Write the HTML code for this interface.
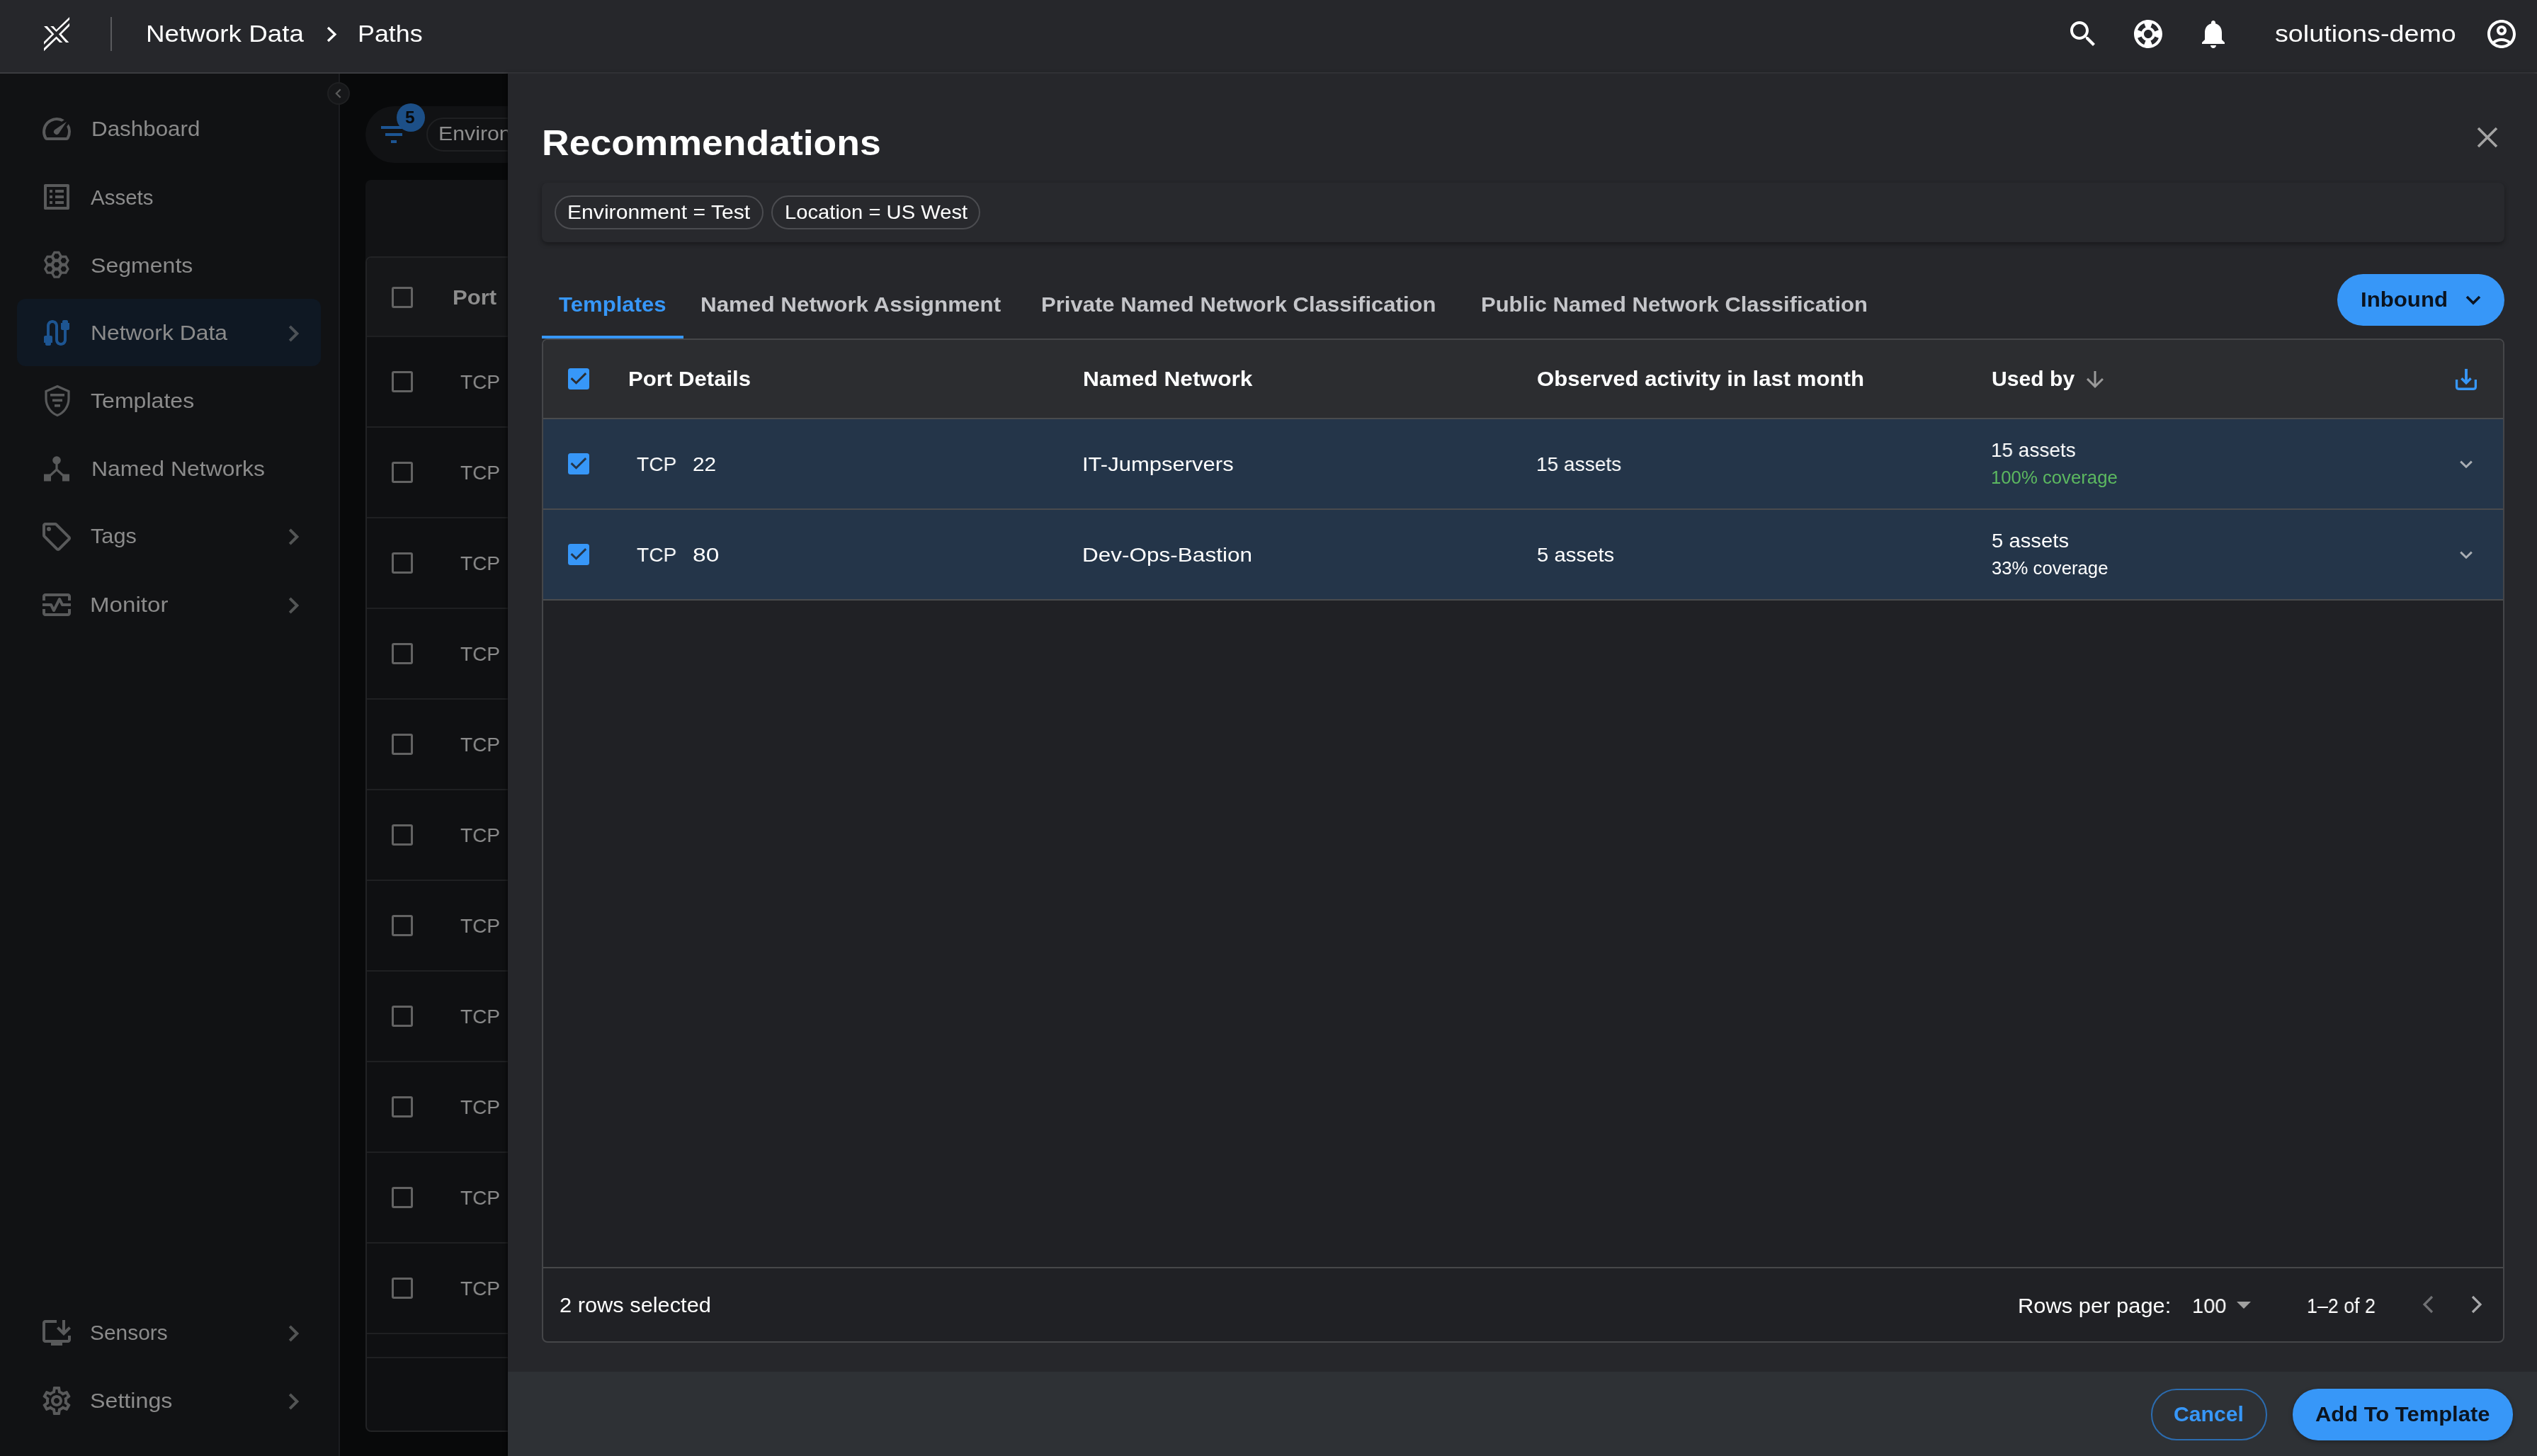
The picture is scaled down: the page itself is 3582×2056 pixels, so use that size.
<!DOCTYPE html>
<html><head><meta charset="utf-8"><title>Recommendations</title>
<style>
html,body{margin:0;padding:0;}
body{width:3582px;height:2056px;overflow:hidden;position:relative;background:#08090a;font-family:"Liberation Sans",sans-serif;}
.a{position:absolute;box-sizing:border-box;}
.t{position:absolute;white-space:nowrap;line-height:1;transform-origin:0 0;will-change:transform;}
svg{position:absolute;overflow:visible;}
</style></head><body>
<div class=a style="left:0;top:0;width:3582px;height:102px;background:#26272b"></div>
<div class=a style="left:0;top:102px;width:3582px;height:2px;background:#3b3c40"></div>
<svg style="left:50px;top:15px" width="120" height="70" viewBox="0 0 2496 1456"><g fill="#fff"><polygon points="250,460 345,460 550,690 250,1000 250,915 480,690"/><polygon points="1000,370 1000,450 760,690 985,935 895,935 685,690"/><polygon points="1000,185 1000,265 615,625 440,460 530,460 615,560"/><polygon points="250,1100 615,760 800,935 710,935 615,830 250,1190"/></g></svg>
<div class=a style="left:156px;top:24px;width:2px;height:48px;background:#5a5b5e"></div>
<div class=t style="left:206.34px;top:32.28px;font-size:32.5px;font-weight:400;color:#fff;transform:scaleX(1.1323);">Network Data</div>
<svg style="left:457px;top:37px" width="24" height="24" viewBox="0 0 24 24"><path d="M6 2 L16 11.5 L6 21" fill="none" stroke="#fff" stroke-width="3.2"/></svg>
<div class=t style="left:504.79px;top:32.28px;font-size:32.5px;font-weight:400;color:#fff;transform:scaleX(1.1032);">Paths</div>
<svg style="left:2917px;top:24px" width="48" height="48" viewBox="0 0 24 24"><path fill="#fff" d="M15.5 14h-.79l-.28-.27C15.41 12.59 16 11.11 16 9.5 16 5.91 13.09 3 9.5 3S3 5.91 3 9.5 5.91 16 9.5 16c1.61 0 3.09-.59 4.23-1.57l.27.28v.79l5 4.99L20.49 19l-4.99-5zm-6 0C7.01 14 5 11.990 5 9.5S7.01 5 9.5 5 14 7.01 14 9.5 11.99 14 9.5 14z"/></svg>
<svg style="left:3009px;top:24px" width="48" height="48" viewBox="0 0 24 24"><path fill="#fff" d="M12 2C6.48 2 2 6.48 2 12s4.48 10 10 10 10-4.48 10-10S17.52 2 12 2zm7.46 7.12l-2.78 1.15c-.51-1.36-1.58-2.440-2.95-2.94l1.15-2.78c2.1.8 3.77 2.47 4.58 4.57zM12 15c-1.66 0-3-1.34-3-3s1.34-3 3-3 3 1.34 3 3-1.34 3-3 3zM9.13 4.54l1.17 2.78c-1.38.5-2.47 1.59-2.98 2.97L4.54 9.13c.81-2.11 2.48-3.78 4.59-4.590zM4.54 14.87l2.78-1.15c.51 1.38 1.59 2.46 2.97 2.96l-1.17 2.78c-2.1-.81-3.77-2.48-4.58-4.59zm10.34 4.59l-1.15-2.78c1.37-.51 2.45-1.59 2.95-2.97l2.78 1.17c-.81 2.1-2.48 3.77-4.58 4.58z"/></svg>
<svg style="left:3101px;top:24px" width="48" height="48" viewBox="0 0 24 24"><path fill="#fff" d="M12 22c1.1 0 2-.9 2-2h-4c0 1.1.89 2 2 2zm6-6v-5c0-3.07-1.64-5.64-4.5-6.32V4c0-.83-.67-1.5-1.5-1.5s-1.5.67-1.5 1.5v.68C7.63 5.36 6 7.920 6 11v5l-2 2v1h16v-1l-2-2z"/></svg>
<div class=t style="left:3212.40px;top:32.28px;font-size:32.5px;font-weight:400;color:#fff;transform:scaleX(1.1609);">solutions-demo</div>
<svg style="left:3508px;top:24px" width="48" height="48" viewBox="0 0 24 24"><path fill="#fff" fill-rule="evenodd" d="M12 2C6.48 2 2 6.48 2 12s4.48 10 10 10 10-4.48 10-10S17.52 2 12 2zM7.35 18.5C8.66 17.56 10.26 17 12 17s3.34.56 4.65 1.5c-1.31.94-2.91 1.5-4.65 1.5s-3.34-.56-4.65-1.5zm10.79-1.38C16.450 15.8 14.32 15 12 15s-4.45.8-6.14 2.12C4.7 15.73 4 13.95 4 12c0-4.42 3.58-8 8-8s8 3.58 8 8c0 1.95-.7 3.73-1.86 5.12zM12 6c-1.93 0-3.5 1.57-3.5 3.5S10.07 13 12 13s3.5-1.57 3.5-3.5S13.93 6 12 6zm0 5c-.83 0-1.5-.67-1.5-1.5S11.17 8 12 8s1.5.67 1.5 1.5S12.83 11 12 11z"/></svg>
<div class=a style="left:0;top:104px;width:478px;height:1952px;background:#111214"></div>
<div class=a style="left:478px;top:104px;width:2px;height:1952px;background:#1c1d20"></div>
<div class=a style="left:24px;top:422px;width:429px;height:95px;background:#0f1823;border-radius:12px"></div>
<div class=a style="left:462px;top:116px;width:32px;height:32px;border-radius:50%;background:#161719;border:2px solid #1f2022"></div>
<svg style="left:470px;top:124px" width="16" height="16" viewBox="0 0 16 16"><path d="M10.7 2.2 L4.9 8 L10.7 13.8" fill="none" stroke="#5a5b5b" stroke-width="2.3"/></svg>
<div class=t style="left:128.67px;top:167.42px;font-size:29.5px;font-weight:400;color:#8b8b8b;transform:scaleX(1.0631);">Dashboard</div>
<div class=t style="left:128.30px;top:263.62px;font-size:29.5px;font-weight:400;color:#8b8b8b;">Assets</div>
<div class=t style="left:127.91px;top:359.62px;font-size:29.5px;font-weight:400;color:#8b8b8b;transform:scaleX(1.0872);">Segments</div>
<div class=t style="left:127.64px;top:455.42px;font-size:29.5px;font-weight:400;color:#8b8b8b;transform:scaleX(1.0801);">Network Data</div>
<div class=t style="left:128.00px;top:551.02px;font-size:29.5px;font-weight:400;color:#8b8b8b;transform:scaleX(1.0875);">Templates</div>
<div class=t style="left:128.53px;top:647.22px;font-size:29.5px;font-weight:400;color:#8b8b8b;transform:scaleX(1.0833);">Named Networks</div>
<div class=t style="left:128.00px;top:742.02px;font-size:29.5px;font-weight:400;color:#8b8b8b;transform:scaleX(1.0396);">Tags</div>
<div class=t style="left:126.75px;top:838.52px;font-size:29.5px;font-weight:400;color:#8b8b8b;transform:scaleX(1.1228);">Monitor</div>
<div class=t style="left:127.49px;top:1867.32px;font-size:29.5px;font-weight:400;color:#8b8b8b;transform:scaleX(1.0134);">Sensors</div>
<div class=t style="left:127.41px;top:1963.02px;font-size:29.5px;font-weight:400;color:#8b8b8b;transform:scaleX(1.0921);">Settings</div>
<svg style="left:404px;top:459.3px" width="24" height="24" viewBox="0 0 24 24"><path d="M5.2 1.9 L15.4 12 L5.2 22.1" fill="none" stroke="#4d5257" stroke-width="4"/></svg>
<svg style="left:404px;top:746px" width="24" height="24" viewBox="0 0 24 24"><path d="M5.2 1.9 L15.4 12 L5.2 22.1" fill="none" stroke="#535555" stroke-width="4"/></svg>
<svg style="left:404px;top:842.5px" width="24" height="24" viewBox="0 0 24 24"><path d="M5.2 1.9 L15.4 12 L5.2 22.1" fill="none" stroke="#535555" stroke-width="4"/></svg>
<svg style="left:404px;top:1871.3px" width="24" height="24" viewBox="0 0 24 24"><path d="M5.2 1.9 L15.4 12 L5.2 22.1" fill="none" stroke="#535555" stroke-width="4"/></svg>
<svg style="left:404px;top:1967px" width="24" height="24" viewBox="0 0 24 24"><path d="M5.2 1.9 L15.4 12 L5.2 22.1" fill="none" stroke="#535555" stroke-width="4"/></svg>
<svg style="left:56px;top:158px" width="48" height="48" viewBox="0 0 24 24"><g fill="#595a5b"><path d="M20.38 8.57l-1.23 1.85a8 8 0 0 1-.22 7.58H5.07A8 8 0 0 1 15.58 6.85l1.85-1.23A10 10 0 0 0 3.35 19a2 2 0 0 0 1.72 1h13.85a2 2 0 0 0 1.74-1 10 10 0 0 0-.27-10.44zm-9.79 6.84a2 2 0 0 0 2.83 0l5.66-8.49-8.49 5.66a2 2 0 0 0 0 2.83z"/></g></svg>
<svg style="left:56px;top:254px" width="48" height="48" viewBox="0 0 24 24"><g fill="#595a5b"><path d="M19 5v14H5V5h14m1.1-2H3.9c-.5 0-.9.4-.9.9v16.2c0 .4.4.9.9.9h16.2c.4 0 .9-.5.9-.9V3.9c0-.5-.5-.9-.9-.9zM11 7h6v2h-6V7zm0 4h6v2h-6v-2zm0 4h6v2h-6zM7 7h2v2H7zm0 4h2v2H7zm0 4h2v2H7z"/></g></svg>
<svg style="left:0;top:0" width="120" height="420" viewBox="0 0 120 420"><g fill="none" stroke="#595a5b" stroke-width="3.3" stroke-linejoin="miter"><polygon points="86.00,361.80 82.95,367.08 76.85,367.08 73.80,361.80 76.85,356.52 82.95,356.52"/><polygon points="86.00,373.80 82.95,379.08 76.85,379.08 73.80,373.80 76.85,368.52 82.95,368.52"/><polygon points="86.00,385.80 82.95,391.08 76.85,391.08 73.80,385.80 76.85,380.52 82.95,380.52"/><polygon points="76.10,367.80 73.05,373.08 66.95,373.08 63.90,367.80 66.95,362.52 73.05,362.52"/><polygon points="95.90,367.80 92.85,373.08 86.75,373.08 83.70,367.80 86.75,362.52 92.85,362.52"/><polygon points="76.10,379.80 73.05,385.08 66.95,385.08 63.90,379.80 66.95,374.52 73.05,374.52"/><polygon points="95.90,379.80 92.85,385.08 86.75,385.08 83.70,379.80 86.75,374.52 92.85,374.52"/></g></svg>
<svg style="left:56px;top:446px" width="48" height="48" viewBox="0 0 24 24"><g fill="#1d5592"><path d="M20 5V4c0-.55-.45-1-1-1h-2c-.55 0-1 .45-1 1v1h-1v4c0 .55.45 1 1 1h1v7c0 1.1-.9 2-2 2s-2-.9-2-2V7c0-2.21-1.79-4-4-4S5 4.79 5 7v7H4c-.55 0-1 .45-1 1v4h1v1c0 .55.45 1 1 1h2c.55 0 1-.45 1-1v-1h1v-4c0-.55-.45-1-1-1H7V7c0-1.1.9-2 2-2s2 .9 2 2v10c0 2.21 1.790 4 4 4s4-1.79 4-4v-7h1c.55 0 1-.45 1-1V5h-1z"/></g></svg>
<svg style="left:0;top:0" width="120" height="620" viewBox="0 0 120 620"><path d="M81 545.5 L97 552.5 V563 C97 574 90 583 81 586.5 C72 583 65 574 65 563 V552.5 Z" fill="none" stroke="#595a5b" stroke-width="3.2"/><rect x="71" y="556" width="20" height="3.6" fill="#595a5b"/><rect x="74" y="563.5" width="14" height="3.6" fill="#595a5b"/><rect x="77" y="571" width="8" height="3.6" fill="#595a5b"/></svg>
<svg style="left:0;top:0" width="120" height="700" viewBox="0 0 120 700"><circle cx="80" cy="650" r="5.8" fill="#595a5b"/><path d="M80 652 V663 L67 675 M80 663 L93 675" fill="none" stroke="#595a5b" stroke-width="3.2"/><rect x="62" y="669.5" width="10" height="10" fill="#595a5b"/><rect x="88" y="669.5" width="10" height="10" fill="#595a5b"/></svg>
<svg style="left:56px;top:734px" width="48" height="48" viewBox="0 0 24 24"><g fill="#595a5b"><path d="M21.41 11.58l-9-9C12.05 2.22 11.55 2 11 2H4c-1.1 0-2 .9-2 2v7c0 .55.22 1.05.59 1.42l9 9c.36.36.86.58 1.41.58s1.05-.22 1.41-.59l7-7c.37-.36.59-.86.59-1.41s-.23-1.06-.59-1.42zM13 20.01L4 11V4h7v-.01l9 9-7 7.02z"/><circle cx="6.5" cy="6.5" r="1.5"/></g></svg>
<svg style="left:56px;top:829.5px" width="48" height="48" viewBox="0 0 24 24"><g fill="#595a5b"><path d="M20 4H4c-1.1 0-2 .9-2 2v3h2V6h16v3h2V6c0-1.1-.9-2-2-2zM20 18H4v-3H2v3c0 1.1.9 2 2 2h16c1.1 0 2-.9 2-2v-3h-2v3zM14.89 7.55c-.34-.68-1.45-.68-1.79 0L10 13.76l-1.11-2.21A.988.988 0 0 0 8 11H2v2h5.38l1.72 3.45c.18.34.52.55.9.55s.72-.21.89-.55L14 10.24l1.11 2.21c.17.34.51.55.89.55h6v-2h-5.38l-1.73-3.45z"/></g></svg>
<svg style="left:56px;top:1858px" width="48" height="48" viewBox="0 0 24 24"><g fill="#595a5b"><path d="M20 17H4V5h8V3H4c-1.11 0-2 .89-2 2v12c0 1.1.89 2 2 2h4v2h8v-2h4c1.1 0 2-.9 2-2v-3h-2v3z"/><path d="M17 14l5-5-1.41-1.41L18 10.17V3h-2v7.17l-2.59-2.58L12 9z"/></g></svg>
<svg style="left:56px;top:1954px" width="48" height="48" viewBox="0 0 24 24"><g fill="#595a5b"><path d="M19.43 12.98c.04-.32.07-.64.07-.98 0-.34-.03-.66-.07-.98l2.11-1.65c.19-.15.24-.42.12-.64l-2-3.46a.5.5 0 0 0-.61-.22l-2.49 1c-.52-.4-1.08-.73-1.69-.98l-.38-2.65A.488.488 0 0 0 14 2h-4c-.25 0-.46.18-.49.42l-.38 2.65c-.61.25-1.17.59-1.69.98l-2.49-1a.566.566 0 0 0-.18-.03c-.17 0-.34.09-.43.25l-2 3.46c-.13.22-.07.49.12.64l2.11 1.65c-.04.32-.07.65-.07.98 0 .33.03.66.07.98l-2.11 1.65c-.19.15-.24.42-.12.64l2 3.46a.5.5 0 0 0 .61.22l2.49-1c.52.4 1.08.73 1.69.98l.38 2.65c.03.24.24.42.49.42h4c.25 0 .46-.18.49-.42l.38-2.65c.61-.25 1.17-.59 1.69-.98l2.49 1c.06.02.12.03.18.03.17 0 .34-.09.43-.25l2-3.46c.12-.22.07-.49-.12-.64l-2.11-1.65zm-1.98-1.71c.04.31.05.52.05.73 0 .21-.02.43-.05.73l-.14 1.13.89.7 1.08.84-.7 1.21-1.27-.51-1.04-.42-.9.68c-.43.32-.84.56-1.25.73l-1.06.43-.16 1.13-.2 1.35h-1.4l-.19-1.35-.16-1.13-1.06-.43c-.43-.18-.83-.41-1.23-.71l-.91-.7-1.06.43-1.27.51-.7-1.21 1.08-.84.89-.7-.14-1.13c-.03-.31-.05-.54-.05-.74s.02-.43.05-.73l.14-1.13-.89-.7-1.08-.84.7-1.21 1.27.51 1.04.42.9-.68c.43-.32.84-.56 1.25-.73l1.06-.43.16-1.13.2-1.35h1.39l.19 1.35.16 1.13 1.06.43c.43.18.83.41 1.23.71l.91.7 1.06-.43 1.27-.51.7 1.21-1.07.85-.89.7.14 1.13zM12 8c-2.21 0-4 1.79-4 4s1.79 4 4 4 4-1.79 4-4-1.79-4-4-4zm0 6c-1.1 0-2-.9-2-2s.9-2 2-2 2 .9 2 2-.9 2-2 2z"/></g></svg>
<div class=a style="left:516px;top:150px;width:400px;height:80px;border-radius:40px;background:#111214"></div>
<div class=a style="left:602px;top:166px;width:300px;height:48px;border-radius:24px;border:2px solid #1f2022"></div>
<svg style="left:536px;top:176px" width="36" height="28" viewBox="0 0 36 28"><g fill="#1d5593"><rect x="2" y="2" width="30" height="4"/><rect x="8" y="12" width="24" height="4"/><rect x="16" y="22" width="8" height="4"/></g></svg>
<div class=a style="left:560px;top:146px;width:40px;height:40px;border-radius:50%;background:#1c4f87"></div>
<div class=t style="left:572.00px;top:154.26px;font-size:24.5px;font-weight:700;color:#08090a;">5</div>
<div class=t style="left:619.44px;top:175.49px;font-size:28.0px;font-weight:400;color:#8d8d8d;transform:scaleX(1.0810);">Environment = Test</div>
<div class=a style="left:516px;top:254px;width:400px;height:120px;border-radius:8px;background:#121315"></div>
<div class=a style="left:516px;top:362px;width:400px;height:1660px;border-radius:8px;background:#0f1012;border:2px solid #222325;overflow:hidden"><div class=a style="left:0;top:0;width:400px;height:111px;background:#161719"></div></div>
<div class=a style="left:553px;top:405px;width:30px;height:30px;border:3px solid #636363;border-radius:3px"></div>
<div class=t style="left:638.55px;top:405.42px;font-size:29.5px;font-weight:700;color:#8d8d8d;transform:scaleX(1.0520);">Port</div>
<div class=a style="left:518px;top:474px;width:400px;height:2px;background:#1f2022"></div>
<div class=a style="left:553px;top:524px;width:30px;height:30px;border:3px solid #636363;border-radius:3px"></div>
<div class=t style="left:650.00px;top:524.87px;font-size:28.5px;font-weight:400;color:#8d8d8d;transform:scaleX(0.9823);">TCP</div>
<div class=a style="left:518px;top:602px;width:400px;height:2px;background:#1f2022"></div>
<div class=a style="left:553px;top:652px;width:30px;height:30px;border:3px solid #636363;border-radius:3px"></div>
<div class=t style="left:650.00px;top:652.87px;font-size:28.5px;font-weight:400;color:#8d8d8d;transform:scaleX(0.9823);">TCP</div>
<div class=a style="left:518px;top:730px;width:400px;height:2px;background:#1f2022"></div>
<div class=a style="left:553px;top:780px;width:30px;height:30px;border:3px solid #636363;border-radius:3px"></div>
<div class=t style="left:650.00px;top:780.87px;font-size:28.5px;font-weight:400;color:#8d8d8d;transform:scaleX(0.9823);">TCP</div>
<div class=a style="left:518px;top:858px;width:400px;height:2px;background:#1f2022"></div>
<div class=a style="left:553px;top:908px;width:30px;height:30px;border:3px solid #636363;border-radius:3px"></div>
<div class=t style="left:650.00px;top:908.87px;font-size:28.5px;font-weight:400;color:#8d8d8d;transform:scaleX(0.9823);">TCP</div>
<div class=a style="left:518px;top:986px;width:400px;height:2px;background:#1f2022"></div>
<div class=a style="left:553px;top:1036px;width:30px;height:30px;border:3px solid #636363;border-radius:3px"></div>
<div class=t style="left:650.00px;top:1036.87px;font-size:28.5px;font-weight:400;color:#8d8d8d;transform:scaleX(0.9823);">TCP</div>
<div class=a style="left:518px;top:1114px;width:400px;height:2px;background:#1f2022"></div>
<div class=a style="left:553px;top:1164px;width:30px;height:30px;border:3px solid #636363;border-radius:3px"></div>
<div class=t style="left:650.00px;top:1164.87px;font-size:28.5px;font-weight:400;color:#8d8d8d;transform:scaleX(0.9823);">TCP</div>
<div class=a style="left:518px;top:1242px;width:400px;height:2px;background:#1f2022"></div>
<div class=a style="left:553px;top:1292px;width:30px;height:30px;border:3px solid #636363;border-radius:3px"></div>
<div class=t style="left:650.00px;top:1292.87px;font-size:28.5px;font-weight:400;color:#8d8d8d;transform:scaleX(0.9823);">TCP</div>
<div class=a style="left:518px;top:1370px;width:400px;height:2px;background:#1f2022"></div>
<div class=a style="left:553px;top:1420px;width:30px;height:30px;border:3px solid #636363;border-radius:3px"></div>
<div class=t style="left:650.00px;top:1420.87px;font-size:28.5px;font-weight:400;color:#8d8d8d;transform:scaleX(0.9823);">TCP</div>
<div class=a style="left:518px;top:1498px;width:400px;height:2px;background:#1f2022"></div>
<div class=a style="left:553px;top:1548px;width:30px;height:30px;border:3px solid #636363;border-radius:3px"></div>
<div class=t style="left:650.00px;top:1548.87px;font-size:28.5px;font-weight:400;color:#8d8d8d;transform:scaleX(0.9823);">TCP</div>
<div class=a style="left:518px;top:1626px;width:400px;height:2px;background:#1f2022"></div>
<div class=a style="left:553px;top:1676px;width:30px;height:30px;border:3px solid #636363;border-radius:3px"></div>
<div class=t style="left:650.00px;top:1676.87px;font-size:28.5px;font-weight:400;color:#8d8d8d;transform:scaleX(0.9823);">TCP</div>
<div class=a style="left:518px;top:1754px;width:400px;height:2px;background:#1f2022"></div>
<div class=a style="left:553px;top:1804px;width:30px;height:30px;border:3px solid #636363;border-radius:3px"></div>
<div class=t style="left:650.00px;top:1804.87px;font-size:28.5px;font-weight:400;color:#8d8d8d;transform:scaleX(0.9823);">TCP</div>
<div class=a style="left:518px;top:1882px;width:400px;height:2px;background:#1f2022"></div>
<div class=a style="left:518px;top:1916px;width:400px;height:2px;background:#1f2022"></div>
<div class=a style="left:717px;top:104px;width:2865px;height:1952px;background:#26272b;box-shadow:-2px 0 4px rgba(0,0,0,0.5)"></div>
<div class=t style="left:764.96px;top:177.49px;font-size:49.5px;font-weight:700;color:#fff;transform:scaleX(1.0810);">Recommendations</div>
<svg style="left:3496px;top:178px" width="32" height="32" viewBox="0 0 32 32"><path d="M3 3 L29 29 M29 3 L3 29" stroke="#a4a4a4" stroke-width="3.6" fill="none"/></svg>
<div class=a style="left:765px;top:258px;width:2771px;height:84px;border-radius:8px;background:#28292d;box-shadow:0 3px 6px rgba(0,0,0,0.35)"></div>
<div class=a style="left:783px;top:276px;width:295px;height:48px;border-radius:24px;border:2px solid #4b4c50"></div>
<div class=a style="left:1089px;top:276px;width:295px;height:48px;border-radius:24px;border:2px solid #4b4c50"></div>
<div class=t style="left:800.65px;top:285.59px;font-size:28.0px;font-weight:400;color:#fff;transform:scaleX(1.0760);">Environment = Test</div>
<div class=t style="left:1107.82px;top:285.59px;font-size:28.0px;font-weight:400;color:#fff;transform:scaleX(1.0421);">Location = US West</div>
<div class=t style="left:789.10px;top:415.10px;font-size:30.0px;font-weight:700;color:#3797f8;transform:scaleX(1.0373);">Templates</div>
<div class=t style="left:988.71px;top:415.10px;font-size:30.0px;font-weight:700;color:#c4c5c9;transform:scaleX(1.0455);">Named Network Assignment</div>
<div class=t style="left:1470.43px;top:414.60px;font-size:30.0px;font-weight:700;color:#c4c5c9;transform:scaleX(1.0353);">Private Named Network Classification</div>
<div class=t style="left:2090.93px;top:414.60px;font-size:30.0px;font-weight:700;color:#c4c5c9;transform:scaleX(1.0329);">Public Named Network Classification</div>
<div class=a style="left:3300px;top:387px;width:236px;height:73px;border-radius:37px;background:#3797f8"></div>
<div class=t style="left:3332.54px;top:408.32px;font-size:29.5px;font-weight:700;color:#0b1420;transform:scaleX(1.0578);">Inbound</div>
<svg style="left:3480px;top:416px" width="24" height="16" viewBox="0 0 24 16"><path d="M3 3 L12 12 L21 3" stroke="#0b1420" stroke-width="3.6" fill="none"/></svg>
<div class=a style="left:765px;top:478px;width:2771px;height:1418px;border:2px solid #454649;border-radius:8px;background:#202125;overflow:hidden"><div class=a style="left:0;top:0;width:2767px;height:112px;background:#2c2d30"></div><div class=a style="left:0;top:112px;width:2767px;height:256px;background:#243549"></div><div class=a style="left:0;top:110px;width:2767px;height:2px;background:#4a4b4d"></div><div class=a style="left:0;top:238px;width:2767px;height:2px;background:#4a4b4d"></div><div class=a style="left:0;top:366px;width:2767px;height:2px;background:#4a4b4d"></div><div class=a style="left:0;top:1309px;width:2767px;height:2px;background:#464749"></div></div>
<div class=a style="left:765px;top:474px;width:200px;height:4px;background:#3797f8"></div>
<div class=a style="left:802px;top:520px;width:30px;height:30px;border-radius:3.5px;background:#3797f8"></div>
<svg style="left:802px;top:520px" width="30" height="30" viewBox="0 0 30 30"><path d="M4.6 14.1 L11.5 20.8 L25.2 7.1" stroke="#2c2d30" stroke-width="2.9" fill="none"/></svg>
<div class=t style="left:887.33px;top:521.45px;font-size:29.0px;font-weight:700;color:#fff;transform:scaleX(1.0740);">Port Details</div>
<div class=t style="left:1528.61px;top:521.45px;font-size:29.0px;font-weight:700;color:#fff;transform:scaleX(1.0925);">Named Network</div>
<div class=t style="left:2170.23px;top:521.45px;font-size:29.0px;font-weight:700;color:#fff;transform:scaleX(1.0735);">Observed activity in last month</div>
<div class=t style="left:2812.46px;top:521.45px;font-size:29.0px;font-weight:700;color:#fff;transform:scaleX(1.0386);">Used by</div>
<svg style="left:2940px;top:518px" width="36" height="36" viewBox="0 0 24 24"><path fill="#9a9a9a" d="M20 12l-1.41-1.41L13 16.17V4h-2v12.17l-5.58-5.59L4 12l8 8 8-8z"/></svg>
<svg style="left:3460px;top:515px" width="44" height="44" viewBox="0 0 44 44"><g fill="none" stroke="#3797f8"><path d="M22 5.9 V26" stroke-width="3.9"/><path d="M15.4 19.2 L22 25.8 L28.6 19.2" stroke-width="3.4"/><path d="M8.55 20.9 V31.3 Q8.55 34.25 11.5 34.25 H32.4 Q35.35 34.25 35.35 31.3 V20.9" stroke-width="3.3"/></g></svg>
<div class=a style="left:802px;top:640px;width:30px;height:30px;border-radius:3.5px;background:#3797f8"></div>
<svg style="left:802px;top:640px" width="30" height="30" viewBox="0 0 30 30"><path d="M4.6 14.1 L11.5 20.8 L25.2 7.1" stroke="#243549" stroke-width="2.9" fill="none"/></svg>
<div class=t style="left:898.70px;top:640.87px;font-size:28.5px;font-weight:400;color:#fff;transform:scaleX(0.9877);">TCP</div>
<div class=t style="left:977.75px;top:640.87px;font-size:28.5px;font-weight:400;color:#fff;transform:scaleX(1.0452);">22</div>
<div class=t style="left:1528.12px;top:640.87px;font-size:28.5px;font-weight:400;color:#fff;transform:scaleX(1.0880);">IT-Jumpservers</div>
<div class=t style="left:2169.03px;top:640.87px;font-size:28.5px;font-weight:400;color:#fff;transform:scaleX(0.9855);">15 assets</div>
<div class=t style="left:2811.04px;top:621.37px;font-size:28.5px;font-weight:400;color:#fff;transform:scaleX(0.9813);">15 assets</div>
<div class=t style="left:2811.17px;top:662.13px;font-size:25.0px;font-weight:400;color:#5cb860;transform:scaleX(1.0289);">100% coverage</div>
<svg style="left:3470px;top:648px" width="24" height="16" viewBox="0 0 24 16"><path d="M4.2 3.6 L12 11.3 L19.8 3.6" stroke="#a9aeb4" stroke-width="2.9" fill="none"/></svg>
<div class=a style="left:802px;top:768px;width:30px;height:30px;border-radius:3.5px;background:#3797f8"></div>
<svg style="left:802px;top:768px" width="30" height="30" viewBox="0 0 30 30"><path d="M4.6 14.1 L11.5 20.8 L25.2 7.1" stroke="#243549" stroke-width="2.9" fill="none"/></svg>
<div class=t style="left:898.70px;top:768.87px;font-size:28.5px;font-weight:400;color:#fff;transform:scaleX(0.9877);">TCP</div>
<div class=t style="left:977.62px;top:768.87px;font-size:28.5px;font-weight:400;color:#fff;transform:scaleX(1.1792);">80</div>
<div class=t style="left:1528.09px;top:768.87px;font-size:28.5px;font-weight:400;color:#fff;transform:scaleX(1.1058);">Dev-Ops-Bastion</div>
<div class=t style="left:2169.97px;top:768.87px;font-size:28.5px;font-weight:400;color:#fff;transform:scaleX(1.0297);">5 assets</div>
<div class=t style="left:2811.97px;top:749.37px;font-size:28.5px;font-weight:400;color:#fff;transform:scaleX(1.0278);">5 assets</div>
<div class=t style="left:2812.20px;top:790.13px;font-size:25.0px;font-weight:400;color:#ffffff;transform:scaleX(1.0288);">33% coverage</div>
<svg style="left:3470px;top:776px" width="24" height="16" viewBox="0 0 24 16"><path d="M4.2 3.6 L12 11.3 L19.8 3.6" stroke="#a9aeb4" stroke-width="2.9" fill="none"/></svg>
<div class=t style="left:790.36px;top:1828.22px;font-size:29.5px;font-weight:400;color:#fff;transform:scaleX(1.0437);">2 rows selected</div>
<div class=t style="left:2849.21px;top:1828.52px;font-size:29.5px;font-weight:400;color:#fff;transform:scaleX(1.0473);">Rows per page:</div>
<div class=t style="left:3095.33px;top:1828.52px;font-size:29.5px;font-weight:400;color:#fff;transform:scaleX(0.9848);">100</div>
<svg style="left:3156px;top:1836px" width="24" height="14" viewBox="0 0 24 14"><path d="M2 2 H22 L12 12 Z" fill="#a0a0a0"/></svg>
<div class=t style="left:3256.88px;top:1828.52px;font-size:29.5px;font-weight:400;color:#fff;transform:scaleX(0.9088);">1–2 of 2</div>
<svg style="left:3415.5px;top:1828px" width="24" height="28" viewBox="0 0 24 28"><path d="M18 3 L7 14 L18 25" stroke="#707174" stroke-width="3.2" fill="none"/></svg>
<svg style="left:3485.5px;top:1828px" width="24" height="28" viewBox="0 0 24 28"><path d="M5 3 L16 14 L5 25" stroke="#a8a9ab" stroke-width="3.2" fill="none"/></svg>
<div class=a style="left:717px;top:1937px;width:2865px;height:119px;background:#2e3135"></div>
<div class=a style="left:3037px;top:1961px;width:164px;height:73px;border-radius:36px;border:2px solid #2b6cb0"></div>
<div class=t style="left:3069.48px;top:1982.02px;font-size:29.5px;font-weight:700;color:#3797f8;transform:scaleX(1.0218);">Cancel</div>
<div class=a style="left:3237px;top:1961px;width:311px;height:73px;border-radius:36px;background:#3797f8;box-shadow:0 2px 6px rgba(0,0,0,0.3)"></div>
<div class=t style="left:3269.00px;top:1982.02px;font-size:29.5px;font-weight:700;color:#0b1420;transform:scaleX(1.0490);">Add To Template</div>
</body></html>
